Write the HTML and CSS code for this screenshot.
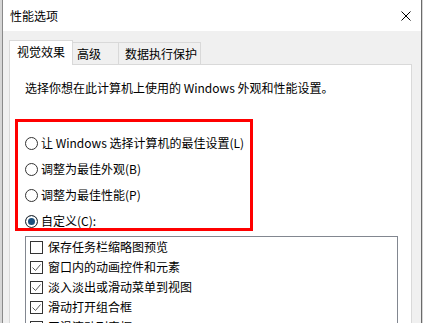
FILE: index.html
```html
<!DOCTYPE html>
<html lang="zh-CN">
<head>
<meta charset="utf-8">
<title>性能选项</title>
<link rel="stylesheet" href="styles.css">
</head>
<body>
<div class="window">
  <div class="titlebar">
    <span class="title">性能选项</span>
    <svg class="close" width="10" height="10" viewBox="0 0 10 10"><path d="M0.5 0.5 L9.5 9.5 M9.5 0.5 L0.5 9.5" stroke="#000" stroke-width="1" fill="none"/></svg>
  </div>
  <div class="client">
    <div class="tabs">
      <div class="tab tab-sel t1">视觉效果</div>
      <div class="tab t2">高级</div>
      <div class="tab t3">数据执行保护</div>
    </div>
    <div class="panel">
      <p class="intro">选择你想在此计算机上使用的 Windows 外观和性能设置。</p>
      <div class="radios">
        <div class="radio-row"><span class="radio"></span><span>让 Windows 选择计算机的最佳设置(L)</span></div>
        <div class="radio-row"><span class="radio"></span><span>调整为最佳外观(B)</span></div>
        <div class="radio-row"><span class="radio"></span><span>调整为最佳性能(P)</span></div>
        <div class="radio-row"><span class="radio radio-on"></span><span>自定义(C):</span></div>
      </div>
      <div class="listbox">
        <div class="item"><span class="cb"></span><span>保存任务栏缩略图预览</span></div>
        <div class="item"><span class="cb"><svg width="11" height="11" viewBox="0 0 11 11"><path d="M1.5 5.5 L4.5 8.5 L9.5 2.5" stroke="#5c5c5c" stroke-width="1" fill="none"/></svg></span><span>窗口内的动画控件和元素</span></div>
        <div class="item"><span class="cb"><svg width="11" height="11" viewBox="0 0 11 11"><path d="M1.5 5.5 L4.5 8.5 L9.5 2.5" stroke="#5c5c5c" stroke-width="1" fill="none"/></svg></span><span>淡入淡出或滑动菜单到视图</span></div>
        <div class="item"><span class="cb"><svg width="11" height="11" viewBox="0 0 11 11"><path d="M1.5 5.5 L4.5 8.5 L9.5 2.5" stroke="#5c5c5c" stroke-width="1" fill="none"/></svg></span><span>滑动打开组合框</span></div>
        <div class="item"><span class="cb"><svg width="11" height="11" viewBox="0 0 11 11"><path d="M1.5 5.5 L4.5 8.5 L9.5 2.5" stroke="#5c5c5c" stroke-width="1" fill="none"/></svg></span><span>平滑滚动列表框</span></div>
      </div>
    </div>
  </div>
  <div class="annot"></div>
</div>
</body>
</html>
```
FILE: styles.css
```css
html, body {
  margin: 0;
  height: 100%;
  overflow: hidden;
}
body {
  background: #d6d6d6;
  font-family: "Noto Sans CJK SC", "Microsoft YaHei", sans-serif;
  font-size: 12px;
  color: #000;
}
.window {
  position: relative;
  margin-left: 2px;
  width: 420px;
  height: 323px;
  box-sizing: border-box;
  border-left: 1px solid #8a8a8a;
  border-right: 1px solid #6a6a6a;
  background: #f0f0f0;
}
.titlebar {
  height: 31px;
  background: #fff;
  display: flex;
  align-items: center;
  justify-content: space-between;
  padding: 0 10px 0 7px;
}
.title {
  line-height: 16px;
}
.close {
  display: block;
}
.client {
  padding: 9px 9px 0 6px;
}
.tabs {
  display: flex;
  align-items: flex-start;
  height: 24px;
}
.tab {
  box-sizing: border-box;
  margin-top: 2px;
  height: 22px;
  border: 1px solid #d9d9d9;
  border-bottom: none;
  background: #f0f0f0;
  display: flex;
  align-items: center;
  line-height: 16px;
  white-space: nowrap;
}
.tab + .tab {
  margin-left: -1px;
}
.tab-sel {
  margin-top: 0;
  height: 25px;
  padding-bottom: 3px;
  background: #fff;
  position: relative;
  z-index: 1;
}
.t1 { width: 64px; padding-left: 7px; }
.t2 { width: 47px; padding-left: 4px; }
.t3 { width: 83px; padding-left: 6px; }
.panel {
  height: 300px;
  border: 1px solid #d9d9d9;
  background: #fff;
  padding: 15px 0 0 15px;
}
.intro {
  margin: 0;
  line-height: 16px;
  white-space: nowrap;
}
.radios {
  margin-top: 34px;
}
.radio-row {
  height: 26px;
  display: flex;
  align-items: center;
  line-height: 16px;
  white-space: nowrap;
}
.radio {
  box-sizing: border-box;
  width: 13px;
  height: 13px;
  border: 1px solid #333;
  border-radius: 50%;
  background: #fff;
  margin-right: 3px;
  flex: none;
}
.radio-on {
  background: #1c4f7c;
  box-shadow: inset 0 0 0 2px #fff;
}
.listbox {
  margin-top: 2px;
  width: 373px;
  height: 200px;
  box-sizing: border-box;
  border: 1px solid #828790;
  background: #fff;
  padding-left: 4px;
}
.item {
  height: 20px;
  display: flex;
  align-items: center;
  line-height: 16px;
  white-space: nowrap;
}
.cb {
  box-sizing: border-box;
  width: 13px;
  height: 13px;
  border: 1px solid #333;
  background: #fff;
  margin-right: 5px;
  flex: none;
  display: flex;
}
.cb svg {
  display: block;
}
.annot {
  position: absolute;
  left: 12px;
  top: 119px;
  width: 238px;
  height: 112px;
  box-sizing: border-box;
  border: 3px solid #ff0000;
}
```
